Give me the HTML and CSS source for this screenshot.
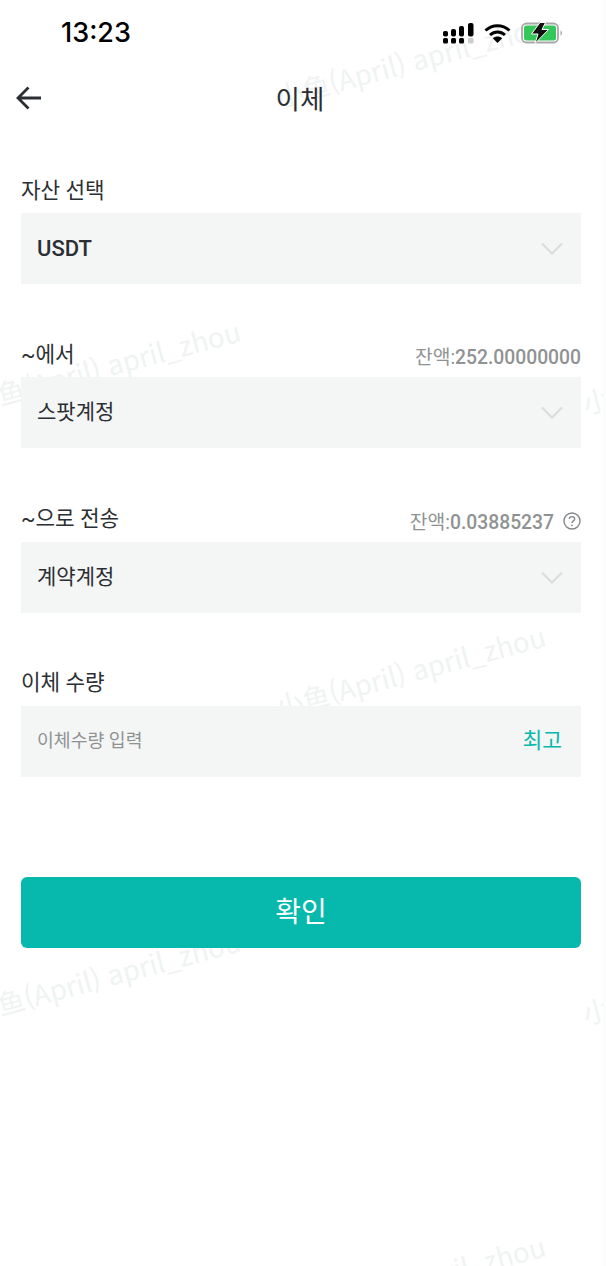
FILE: index.html
```html
<!DOCTYPE html>
<html lang="ko">
<head>
    <meta charset="UTF-8">
    <meta name="viewport" content="width=device-width, initial-scale=1.0">
    <title>이체</title>
    <link rel="stylesheet" href="styles.css">
</head>
<body>
    <div class="page">
        <div class="watermarks" aria-hidden="true">
            <span class="wm wm-a">小鱼(April) april_zhou</span>
            <span class="wm wm-b">小鱼(April) april_zhou</span>
            <span class="wm wm-c">小鱼</span>
            <span class="wm wm-d">小鱼(April) april_zhou</span>
            <span class="wm wm-e">小鱼(April) april_zhou</span>
            <span class="wm wm-f">小鱼</span>
            <span class="wm wm-g">小鱼(April) april_zhou</span>
        </div>

        <div class="statusbar">
            <span class="time">13:23</span>
            <div class="status-icons">
                <svg class="signal" width="31" height="21" viewBox="0 0 31 21">
                    <rect x="0" y="8" width="5" height="5.5" rx="1.8" fill="#000"/>
                    <rect x="0" y="15" width="5" height="5.5" rx="1.5" fill="#000"/>
                    <rect x="8" y="6" width="5" height="7.5" rx="2" fill="#000"/>
                    <rect x="8" y="15" width="5" height="5.5" rx="1.5" fill="#000"/>
                    <rect x="16" y="3" width="5" height="10.5" rx="2" fill="#000"/>
                    <rect x="16" y="15" width="5" height="5.5" rx="1.5" fill="#000"/>
                    <rect x="25" y="0" width="5.5" height="13.5" rx="2" fill="#000"/>
                    <rect x="25" y="15" width="5.5" height="5.5" rx="1.5" fill="#ccc"/>
                </svg>
                <svg class="wifi" width="27" height="20" viewBox="0 0 27 20">
                    <path d="M1.5 7.5C8.5 1 18.500 1 25.500 7.500" fill="none" stroke="#000" stroke-width="3"/>
                    <path d="M6 12C10.500 8 16.500 8 21 12" fill="none" stroke="#000" stroke-width="3"/>
                    <path d="M8.800 15.200C11.500 12.800 15.500 12.800 18.200 15.200L13.500 20Z" fill="#000"/>
                </svg>
                <svg class="battery" width="44" height="22" viewBox="0 0 44 22">
                    <rect x="1" y="1.500" width="36" height="19" rx="4.500" fill="#fff" stroke="#a8a8a8" stroke-width="1.800"/>
                    <rect x="3" y="3.500" width="32" height="15" rx="2.500" fill="#34c759"/>
                    <path d="M39.500 8.500C41.500 9 41.500 13 39.500 13.500Z" fill="#a8a8a8"/>
                    <path d="M19 0.500H24.500L21 7.500H27.500L14 21.500L17 12H10.500Z" fill="#111" stroke="#fff" stroke-width="1"/>
                </svg>
            </div>
        </div>

        <header class="nav">
            <svg class="back" width="28" height="24" viewBox="0 0 28 24">
                <path d="M26 12H3M13.500 1.500L3 12L13.500 22.500" fill="none" stroke="#2b2f33" stroke-width="2.800"/>
            </svg>
            <h1 class="nav-title">이체</h1>
        </header>

        <main class="form">
            <section class="field">
                <div class="field-head">
                    <label class="field-label">자산 선택</label>
                </div>
                <div class="box">
                    <span class="coin">USDT</span>
                    <svg class="chevron" width="22" height="13" viewBox="0 0 22 13"><path d="M1 1.500L11 11.500L21 1.500" fill="none" stroke="#d9dcdc" stroke-width="2"/></svg>
                </div>
            </section>

            <section class="field">
                <div class="field-head">
                    <label class="field-label">~에서</label>
                    <span class="balance"><span><span class="balance-key">잔액:</span>252.00000000</span></span>
                </div>
                <div class="box">
                    <span class="box-value">스팟계정</span>
                    <svg class="chevron" width="22" height="13" viewBox="0 0 22 13"><path d="M1 1.500L11 11.500L21 1.500" fill="none" stroke="#d9dcdc" stroke-width="2"/></svg>
                </div>
            </section>

            <section class="field">
                <div class="field-head">
                    <label class="field-label">~으로 전송</label>
                    <span class="balance">
                        <span><span class="balance-key">잔액:</span>0.03885237</span>
                        <svg class="help" width="18" height="18" viewBox="0 0 18 18">
                            <circle cx="9" cy="9" r="8" fill="none" stroke="#85888a" stroke-width="1.400"/>
                            <path d="M6.300 7C6.300 3.800 11.700 3.800 11.700 7C11.700 9 9 8.800 9 11" fill="none" stroke="#85888a" stroke-width="1.400"/>
                            <circle cx="9" cy="13.300" r="0.900" fill="#85888a"/>
                        </svg>
                    </span>
                </div>
                <div class="box">
                    <span class="box-value">계약계정</span>
                    <svg class="chevron" width="22" height="13" viewBox="0 0 22 13"><path d="M1 1.500L11 11.500L21 1.500" fill="none" stroke="#d9dcdc" stroke-width="2"/></svg>
                </div>
            </section>

            <section class="field">
                <div class="field-head">
                    <label class="field-label">이체 수량</label>
                </div>
                <div class="box">
                    <span class="placeholder">이체수량 입력</span>
                    <span class="max">최고</span>
                </div>
            </section>

            <button class="submit">확인</button>
        </main>
    </div>
</body>
</html>
```

FILE: styles.css
```css
* {
    box-sizing: border-box;
}
body {
    margin: 0;
    background: #fff;
    font-family: Roboto, "Noto Sans CJK KR", sans-serif;
    color: #2b2f33;
}
.page {
    position: relative;
    width: 606px;
    height: 1266px;
    overflow: hidden;
    background: #fff;
    border-right: 3px solid #fbfcfc;
}

/* watermark tiles behind the form */
.watermarks {
    position: absolute;
    inset: 0;
}
.wm {
    position: absolute;
    width: 280px;
    font-family: "Noto Sans CJK SC", sans-serif;
    font-size: 27.500px;
    line-height: 40px;
    white-space: nowrap;
    color: #f0f3f3;
    transform: rotate(-15deg);
}
.wm-a { left: 271px; top: 40px; }
.wm-b { left: -34px; top: 345px; }
.wm-c { left: 578px; top: 347px; }
.wm-d { left: 271px; top: 650px; }
.wm-e { left: -34px; top: 955px; }
.wm-f { left: 578px; top: 957px; }
.wm-g { left: 271px; top: 1260px; }

.statusbar {
    position: relative;
    display: flex;
    justify-content: space-between;
    align-items: center;
    height: 66px;
    padding: 0 38px 0 61px;
}
.time {
    font-family: Inter, sans-serif;
    font-size: 27px;
    font-weight: 500;
    line-height: 30px;
    color: #000;
}
.status-icons {
    display: flex;
    align-items: center;
    gap: 10px;
}

.nav {
    position: relative;
    display: flex;
    justify-content: center;
    align-items: center;
    height: 64px;
}
.back {
    position: absolute;
    left: 15px;
    top: 20px;
}
.nav-title {
    margin: 4px 3px 0 0;
    font-size: 26.500px;
    font-weight: 400;
    line-height: 40px;
}

.form {
    position: relative;
    width: 560px;
    margin: 48px 0 0 21px;
}
.field {
    margin-bottom: 58.300px;
}
.field-head {
    display: flex;
    justify-content: space-between;
    align-items: center;
    height: 35px;
    padding-bottom: 10px;
}
.field-label {
    font-size: 21.300px;
    line-height: 30px;
}
.balance {
    display: flex;
    align-items: center;
    gap: 9px;
    margin-top: 3px;
    font-size: 19.300px;
    font-weight: 500;
    color: #8f9293;
}
.balance-key {
    font-weight: 400;
}
.box {
    display: flex;
    justify-content: space-between;
    align-items: center;
    height: 71px;
    padding: 0 18px 0 16px;
    background: #f4f5f5;
}
.box-value {
    margin-bottom: 5px;
    font-size: 21px;
    color: #2b2f33;
}
.coin {
    font-weight: 500;
    font-size: 22px;
}
.placeholder {
    margin-bottom: 4px;
    font-size: 18.300px;
    color: #8f9293;
}
.max {
    margin: 0 1px 6px 0;
    font-size: 21.500px;
    color: #07b8ac;
}
.submit {
    display: block;
    width: 100%;
    height: 71px;
    margin-top: 100px;
    padding-bottom: 6px;
    border: none;
    border-radius: 6px;
    background: #07b8ac;
    color: #fff;
    font-family: Roboto, "Noto Sans CJK KR", sans-serif;
    font-size: 28px;
}
```
